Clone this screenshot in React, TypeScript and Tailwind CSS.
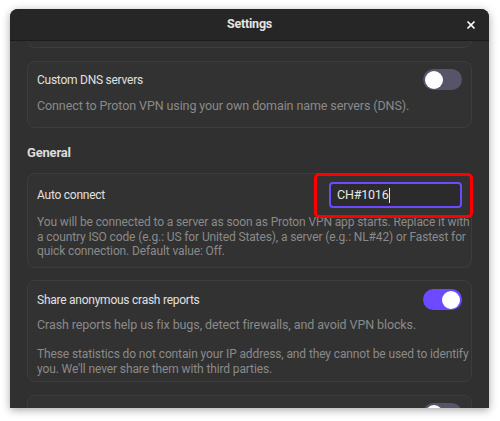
import { X } from "lucide-react";

function Toggle({ on }: { on: boolean }) {
    return (
        <div
            className={
                on
                    ? "flex h-[21px] w-[39px] shrink-0 items-center justify-end rounded-full bg-[#6d4aff] px-[2px]"
                    : "flex h-[21px] w-[39px] shrink-0 items-center justify-start rounded-full bg-[#575369] px-[2px]"
            }
        >
            <div className="h-[18px] w-[18px] rounded-full bg-white" />
        </div>
    );
}

export default function App() {
    return (
        <div className="h-[421px] w-[500px] overflow-hidden bg-white pl-[10px] pt-[9px] font-['Roboto',sans-serif]">
            <div className="flex h-[399px] w-[479px] flex-col overflow-hidden rounded-t-[8px] bg-[#303030] shadow-[0_2px_8px_rgba(0,0,0,0.35)]">
                <div className="relative flex h-[32px] shrink-0 items-center justify-center border-b border-[#1c1c1c] bg-[#262626]">
                    <span className="text-[12.5px] font-bold tracking-[-0.2px] text-[#e4e4e4]">Settings</span>
                    <X className="absolute right-[12px] top-[10px] h-[12px] w-[12px] text-white" strokeWidth={3.5} />
                </div>
                <div className="flex-1 overflow-hidden px-[17px]">
                    <div className="-mt-[40px] flex flex-col">
                        <div className="h-[47px] rounded-[8px] border border-[#3d3d3d] bg-[#323232]" />

                        <div className="mt-[13px] flex h-[67px] flex-col rounded-[8px] border border-[#3d3d3d] bg-[#323232] px-[9px] pt-[7px]">
                            <div className="flex items-center justify-between">
                                <span className="text-[12px] tracking-[-0.25px] text-[#e0e0e0]">Custom DNS servers</span>
                                <Toggle on={false} />
                            </div>
                            <p className="mt-[9px] text-[12.5px] leading-[14.5px] tracking-[-0.1px] text-[#8a8a8a]">
                                Connect to Proton VPN using your own domain name servers (DNS).
                            </p>
                        </div>

                        <h2 className="mt-[16px] h-[18px] text-[13px] font-bold leading-[18px] tracking-[-0.2px] text-[#dcdcdc]">General</h2>

                        <div className="mt-[11px] flex h-[95px] flex-col rounded-[8px] border border-[#3d3d3d] bg-[#323232] pl-[9px] pr-[6px] pt-[8px]">
                            <div className="flex items-center justify-between pr-[3px]">
                                <span className="text-[12px] tracking-[-0.25px] text-[#e0e0e0]">Auto connect</span>
                                <div className="relative">
                                    <div className="pointer-events-none absolute -bottom-[10px] -left-[15px] -right-[11px] -top-[9px] rounded-[5px] border-[3px] border-[#ff0000]" />
                                    <div className="flex h-[26px] w-[133px] items-center rounded-[4px] border-2 border-[#6d4aff] bg-[#2b2b2b] px-[6px]">
                                        <span className="text-[12.5px] tracking-[-0.2px] text-[#e6e6e6]">CH#1016</span>
                                        <span className="ml-[1px] h-[15px] w-[1px] bg-[#e6e6e6]" />
                                    </div>
                                </div>
                            </div>
                            <p className="mt-[7px] whitespace-nowrap text-[12px] leading-[14.5px] tracking-[-0.12px] text-[#8a8a8a]">
                                You will be connected to a server as soon as Proton VPN app starts. Replace it with
                                <br />
                                a country ISO code (e.g.: US for United States), a server (e.g.: NL#42) or Fastest for
                                <br />
                                quick connection. Default value: Off.
                            </p>
                        </div>

                        <div className="mt-[12px] flex h-[102px] flex-col rounded-[8px] border border-[#3d3d3d] bg-[#323232] pl-[9px] pr-[6px] pt-[8px]">
                            <div className="flex items-center justify-between pr-[3px]">
                                <span className="text-[12px] tracking-[-0.25px] text-[#e0e0e0]">Share anonymous crash reports</span>
                                <Toggle on={true} />
                            </div>
                            <p className="mt-[8px] text-[12.5px] leading-[14.5px] tracking-[-0.1px] text-[#8a8a8a]">
                                Crash reports help us fix bugs, detect firewalls, and avoid VPN blocks.
                            </p>
                            <p className="mt-[14.5px] whitespace-nowrap text-[12px] leading-[14.5px] tracking-[-0.12px] text-[#8a8a8a]">
                                These statistics do not contain your IP address, and they cannot be used to identify
                                <br />
                                you. We'll never share them with third parties.
                            </p>
                        </div>

                        <div className="mt-[13px] flex h-[60px] flex-col rounded-[8px] border border-[#3d3d3d] bg-[#323232] px-[9px] pt-[7px]">
                            <div className="flex items-center justify-end">
                                <Toggle on={false} />
                            </div>
                        </div>
                    </div>
                </div>
            </div>
        </div>
    );
}
